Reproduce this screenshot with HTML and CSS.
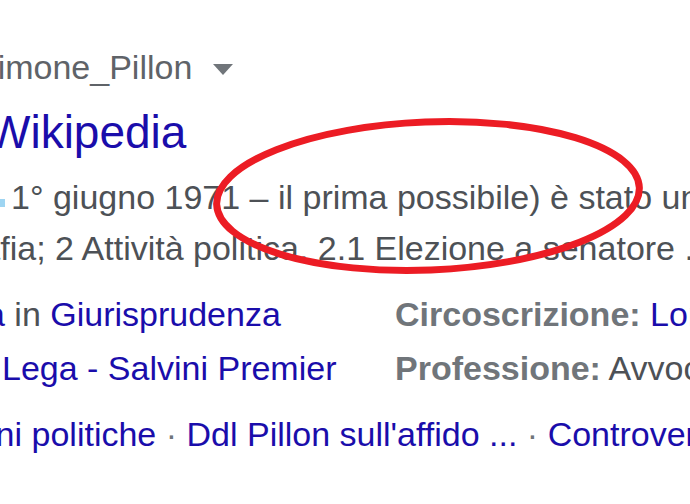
FILE: index.html
```html
<!DOCTYPE html>
<html lang="it">

<head>
    <meta charset="UTF-8">
    <meta name="viewport" content="width=device-width, initial-scale=1.0">
    <title>Simone Pillon - Wikipedia</title>
    <link rel="stylesheet" href="styles.css">
</head>

<body>
    <div class="result">
        <div class="cite"><span class="cite-path">Simone_Pillon</span><span class="caret"></span></div>
        <div class="title"><a href="#">Wikipedia</a></div>
        <div class="snippet">
            <div><span class="hl"></span>1° giugno 1971 – il prima possibile) è stato un</div>
            <div><span class="pull-bio">Biografia;</span> 2 Attività politica. 2.1 Elezione a senatore ...</div>
        </div>
        <div class="facts">
            <div><a href="#" class="pull-laurea">Laurea</a> in <a href="#">Giurisprudenza</a></div>
            <div><b>Circoscrizione:</b> <a href="#">Lombardia</a></div>
            <div class="party"><a href="#">Lega - Salvini Premier</a></div>
            <div><b>Professione:</b> Avvocato</div>
        </div>
        <div class="sitelinks">
            <a href="#" class="pull-elezioni">Elezioni politiche</a><span class="sep"> · </span><a href="#">Ddl Pillon sull'affido ...</a><span class="sep"> · </span><a href="#">Controversie</a>
        </div>
    </div>

    <!-- cerchio rosso disegnato a mano sopra il risultato -->
    <svg class="scribble" width="690" height="504" viewBox="0 0 690 504">
        <ellipse cx="428" cy="196" rx="211.5" ry="74" fill="none" stroke="#ec1c24" stroke-width="7"
            transform="rotate(-2.3 428 196)" />
    </svg>
</body>

</html>
```

FILE: styles.css
```css
html,
body {
    margin: 0;
    padding: 0;
}

body {
    position: relative;
    width: 690px;
    height: 504px;
    overflow: hidden;
    background: #fff;
    font-family: "Liberation Sans", Arial, sans-serif;
    font-size: 34px;
    color: #4d5156;
}

a {
    color: #1a0dab;
    text-decoration: none;
}

.result {
    padding-top: 41px;
    white-space: nowrap;
}

.cite {
    line-height: 52px;
    color: #5f6368;
}

.cite-path {
    margin-left: -25px;
}

/* freccia del menu */
.caret {
    display: inline-block;
    width: 0;
    height: 0;
    border-left: 10px solid transparent;
    border-right: 10px solid transparent;
    border-top: 11px solid #70757a;
    margin-left: 21px;
    margin-bottom: 4px;
}

.title {
    margin-top: 9px;
    font-size: 46px;
    line-height: 60px;
}

.title a {
    display: inline-block;
    margin-left: -13px;
}

.snippet {
    margin-top: 10px;
    line-height: 51px;
}

.hl {
    display: inline-block;
    width: 5px;
    height: 8px;
    margin-right: 6px;
    margin-bottom: 2px;
    background: #9ed5f2;
}

.pull-bio {
    margin-left: -98px;
}

.facts {
    display: grid;
    grid-template-columns: 395px minmax(0, 1fr);
    margin-top: 13px;
    line-height: 54px;
}

.facts b {
    color: #70757a;
}

.pull-laurea {
    margin-left: -101px;
}

.party {
    padding-left: 2px;
}

.sitelinks {
    margin-top: 12px;
    line-height: 54px;
}

.pull-elezioni {
    margin-left: -97px;
}

.sep {
    color: #70757a;
}

.scribble {
    position: absolute;
    left: 0;
    top: 0;
    pointer-events: none;
}
```
